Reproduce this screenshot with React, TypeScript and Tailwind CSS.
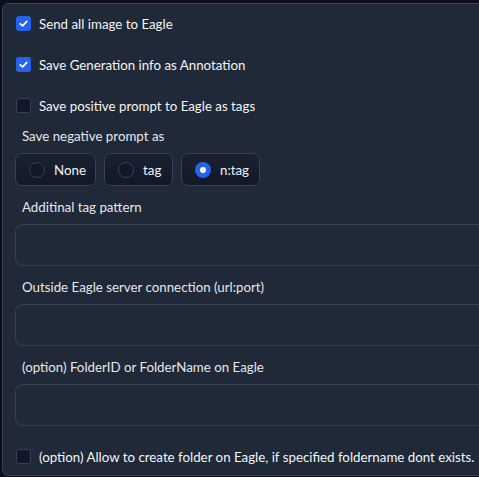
import React from "react";

const font = { fontFamily: "Lato, 'Noto Sans', sans-serif" };

function Check({ checked }: { checked: boolean }) {
  return checked ? (
    <span className="w-[15px] h-[15px] rounded-[3px] bg-[#2563eb] flex items-center justify-center shrink-0">
      <svg width="11" height="11" viewBox="0 0 12 12" fill="none">
        <path d="M2.5 6.3 L5 8.6 L9.6 3.6" stroke="white" strokeWidth="1.9" strokeLinecap="round" strokeLinejoin="round" />
      </svg>
    </span>
  ) : (
    <span className="w-[15px] h-[15px] rounded-[3px] bg-[#111827] border border-[#374151] shrink-0" />
  );
}

function CheckRow({ checked, label, mt }: { checked: boolean; label: string; mt: string }) {
  return (
    <div className={`flex items-center gap-[8px] h-[15px] ${mt}`}>
      <Check checked={checked} />
      <span className="text-[13.3px] leading-[20px] text-[#f3f4f6] whitespace-nowrap">{label}</span>
    </div>
  );
}

function Radio({ label, checked, w }: { label: string; checked: boolean; w: string }) {
  return (
    <div
      className={`${w} h-[33px] flex items-center gap-[9px] pl-[13px] rounded-[7px] border border-[#374151] bg-gradient-to-t from-[#111827] to-[#1a2231]`}
    >
      {checked ? (
        <span className="w-[16px] h-[16px] rounded-full bg-[#2563eb] flex items-center justify-center shrink-0">
          <span className="w-[6px] h-[6px] rounded-full bg-white" />
        </span>
      ) : (
        <span className="w-[16px] h-[16px] rounded-full border border-[#374151] bg-[#111827] shrink-0" />
      )}
      <span className="text-[13.3px] leading-[20px] text-[#f3f4f6]">{label}</span>
    </div>
  );
}

function Field({ label, mt }: { label: string; mt: string }) {
  return (
    <div className={mt}>
      <div className="pl-[7px] text-[13.3px] leading-[20px] text-[#e5e7eb] whitespace-nowrap">{label}</div>
      <div className="mt-[7px] h-[42px] rounded-[8px] border border-[#374151] bg-[#1f2937]" />
    </div>
  );
}

export default function App() {
  return (
    <div className="w-[479px] h-[477px] overflow-hidden bg-[#0b0f19] pt-[3px] pl-[2px]" style={font}>
      <div className="w-[520px] h-[473px] rounded-[6px] border border-[#374151] bg-[#1f2937] pl-[12px] pt-[12px]">
        <div className="pl-[1px]">
          <CheckRow checked label="Send all image to Eagle" mt="mt-0" />
          <CheckRow checked label="Save Generation info as Annotation" mt="mt-[26px]" />
          <CheckRow checked={false} label="Save positive prompt to Eagle as tags" mt="mt-[26px]" />
        </div>
        <div className="mt-[13px] pl-[7px] text-[13.3px] leading-[20px] text-[#e5e7eb]">Save negative prompt as</div>
        <div className="mt-[7px] flex gap-[8px]">
          <Radio label="None" checked={false} w="w-[81px]" />
          <Radio label="tag" checked={false} w="w-[69px]" />
          <Radio label="n:tag" checked w="w-[79px]" />
        </div>
        <Field label="Additinal tag pattern" mt="mt-[11px]" />
        <Field label="Outside Eagle server connection (url:port)" mt="mt-[11px]" />
        <Field label="(option) FolderID or FolderName on Eagle" mt="mt-[11px]" />
        <div className="pl-[1px]">
          <CheckRow checked={false} label="(option) Allow to create folder on Eagle, if specified foldername dont exists." mt="mt-[23px]" />
        </div>
      </div>
    </div>
  );
}
